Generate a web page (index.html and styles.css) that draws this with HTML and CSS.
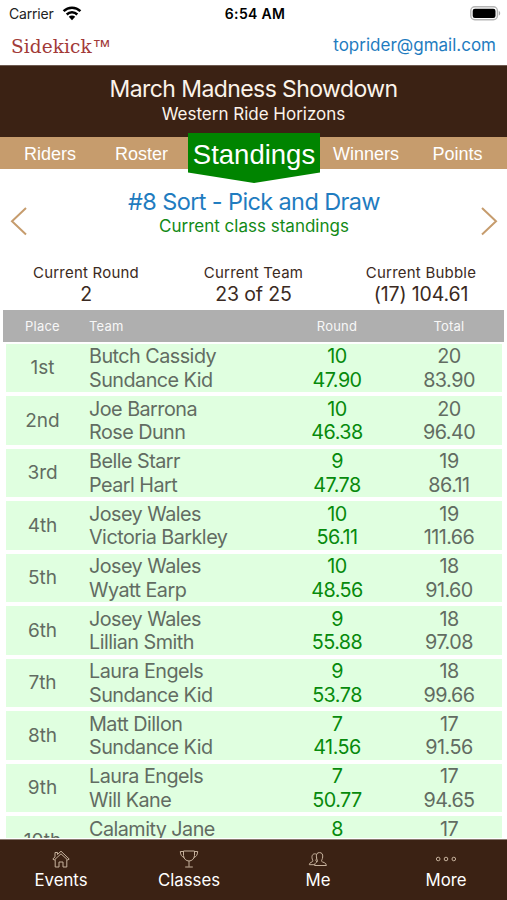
FILE: index.html
```html
<!DOCTYPE html>
<html lang="en">
<head>
<meta charset="utf-8">
<title>Sidekick Standings</title>
<link rel="stylesheet" href="styles.css">
</head>
<body>
<div class="app">
  <div class="status">
    <div class="carrier"><span>Carrier</span>
      <svg width="20" height="15" viewBox="0 0 20 15"><g fill="none" stroke="#000" stroke-width="2.5"><path d="M1.6 5.2a12 12 0 0 1 16.8 0"/><path d="M4.7 8.500a7.600 7.600 0 0 1 10.600 0"/></g><path d="M6.800 10.800a4.600 4.600 0 0 1 6.400 0L10 14.200z"/></svg>
    </div>
    <div class="clock">6:54 AM</div>
    <svg class="battery" width="31" height="15" viewBox="0 0 31 15"><rect x=".8" y=".8" width="26.6" height="13" rx="4" fill="#fff" stroke="#b5b5b5" stroke-width="1.4"/><rect x="2.700" y="2.700" width="22.800" height="9.200" rx="2.200"/><path d="M28.800 5v4.600c1.900-.6 1.900-4 0-4.600z" fill="#aaa"/></svg>
  </div>
  <div class="account"><div class="brand">Sidekick<span>™</span></div><div class="email">toprider@gmail.com</div></div>
  <header class="event"><h1>March Madness Showdown</h1><p>Western Ride Horizons</p></header>
  <nav class="tabs">
    <a class="t1">Riders</a><a class="t2">Roster</a><a class="active"><span>Standings</span></a><a class="t3">Winners</a><a class="t4">Points</a>
  </nav>
  <section class="class-nav">
    <svg width="18" height="30" viewBox="0 0 18 30"><path d="M16 2 2 15.300 16 28.500" fill="none" stroke="#c69c6d" stroke-width="2"/></svg>
    <div class="class-title"><h2>#8 Sort - Pick and Draw</h2><p>Current class standings</p></div>
    <svg width="18" height="30" viewBox="0 0 18 30"><path d="M2 2 16 15.300 2 28.500" fill="none" stroke="#c69c6d" stroke-width="2"/></svg>
  </section>
  <section class="stats">
    <div><label>Current Round</label><b>2</b></div>
    <div><label>Current Team</label><b>23 of 25</b></div>
    <div><label>Current Bubble</label><b>(17) 104.61</b></div>
  </section>
  <div class="cols head"><span>Place</span><span class="team">Team</span><span>Round</span><span>Total</span></div>
  <main class="list">
    <div class="cols row"><div class="place">1st</div><div class="team">Butch Cassidy<br>Sundance Kid</div><div class="round">10<br>47.90</div><div>20<br>83.90</div></div>
    <div class="cols row"><div class="place">2nd</div><div class="team">Joe Barrona<br>Rose Dunn</div><div class="round">10<br>46.38</div><div>20<br>96.40</div></div>
    <div class="cols row"><div class="place">3rd</div><div class="team">Belle Starr<br>Pearl Hart</div><div class="round">9<br>47.78</div><div>19<br>86.11</div></div>
    <div class="cols row"><div class="place">4th</div><div class="team">Josey Wales<br>Victoria Barkley</div><div class="round">10<br>56.11</div><div>19<br>111.66</div></div>
    <div class="cols row"><div class="place">5th</div><div class="team">Josey Wales<br>Wyatt Earp</div><div class="round">10<br>48.56</div><div>18<br>91.60</div></div>
    <div class="cols row"><div class="place">6th</div><div class="team">Josey Wales<br>Lillian Smith</div><div class="round">9<br>55.88</div><div>18<br>97.08</div></div>
    <div class="cols row"><div class="place">7th</div><div class="team">Laura Engels<br>Sundance Kid</div><div class="round">9<br>53.78</div><div>18<br>99.66</div></div>
    <div class="cols row"><div class="place">8th</div><div class="team">Matt Dillon<br>Sundance Kid</div><div class="round">7<br>41.56</div><div>17<br>91.56</div></div>
    <div class="cols row"><div class="place">9th</div><div class="team">Laura Engels<br>Will Kane</div><div class="round">7<br>50.77</div><div>17<br>94.65</div></div>
    <div class="cols row"><div class="place">10th</div><div class="team">Calamity Jane<br>&nbsp;</div><div class="round">8<br>&nbsp;</div><div>17<br>&nbsp;</div></div>
  </main>
  <footer class="bottom">
    <a><svg width="20" height="20" viewBox="0 0 20 20"><path d="M1.800 10 4 7.900V3.500h2.500v2L10 2.200l8.200 7.800-1.400 1.100L10 4.800l-6.800 6.300zM4.200 10.500V18H8v-5h4v5h3.800v-7.500"/></svg>Events</a>
    <a><svg width="20" height="20" viewBox="0 0 20 20"><path d="M4.500 2h11v4.500c0 3-2.500 5.500-5.500 5.500S4.500 9.500 4.500 6.500zM4.500 2.500H1.300C1.500 6 3 8 5.300 8.500M15.500 2.500h3.200C18.500 6 17 8 14.700 8.500M10 12v5.700M6.200 18h7.600"/></svg>Classes</a>
    <a><svg width="20" height="20" viewBox="0 0 20 20"><path d="M9.500 12.300c.4-.7-.9-2-1.100-4.300-.3-3 .8-4.400 3.100-4.400s3.500 1.400 3.200 4.400c-.2 2.300-1.500 3.600-1.100 4.300.6 1.100 4.800 1 4.800 4.200H6.600c0-3 2.400-3.100 2.900-4.200zM8.500 5.200C5.400 4 3.700 5.900 4 8.700c.2 2 1 2.700.8 3.500-.3 1.100-3.500 1-3.500 3.500h5.400M8.700 8.500c-.1 1.600-1 2.500-.7 3.500l1 .9"/></svg>Me</a>
    <a><svg class="dots" width="22" height="20" viewBox="0 0 22 20"><circle cx="3.200" cy="10" r="1.800"/><circle cx="11" cy="10" r="1.800"/><circle cx="18.800" cy="10" r="1.800"/></svg>More</a>
  </footer>
</div>
</body>
</html>
```
FILE: styles.css
```css
* { box-sizing: border-box; }
body { margin: 0; background: #fff; font-family: Inter, "Liberation Sans", sans-serif; }
h1, h2, p { margin: 0; font-weight: 400; }
.app { width: 507px; height: 900px; display: flex; flex-direction: column; overflow: hidden; }
.app > * { flex: none; }
.status { height: 28px; display: grid; grid-template-columns: 1fr auto 1fr; align-items: center; padding: 0 6px 0 9px; }
.carrier { display: flex; align-items: center; gap: 8px; font-size: 14px; letter-spacing: -.2px; color: #222; margin-top: -1px; }
.carrier svg { margin-top: -1px; }
.clock { font-size: 14px; font-weight: 600; letter-spacing: .3px; margin-top: -1px; }
.battery { justify-self: end; margin-top: -2px; }
.account { height: 37px; display: flex; justify-content: space-between; align-items: center; padding: 0 11px; }
.brand { font: 18.500px/22px "DejaVu Serif", serif; letter-spacing: .1px; color: #a23a38; }
.brand span { font-family: "Liberation Sans", sans-serif; }
.email { font-size: 17px; color: #1f7cc0; padding-bottom: 3px; }
.event { height: 72px; background: #3b2214; color: #fbf3ea; text-align: center; padding-top: 10px; border-top: 1px solid #6d5a50; }
.event h1 { font-size: 23px; line-height: 27px; letter-spacing: -.58px; }
.event p { font-size: 17px; line-height: 22px; }
.tabs { height: 32px; display: grid; grid-template-columns: 100px 88px 132px 92px 95px; background: #c69c6d; color: #fff; font: 18px/34px "Liberation Sans", sans-serif; text-align: center; }
.tabs .t2 { padding-right: 5px; }
.tabs .t4 { padding-right: 4px; }
.active { height: 50px; margin-top: -4px; background: #008400; clip-path: polygon(0 0, 100% 0, 100% 79%, 50% 100%, 0 79%); font-size: 27.500px; line-height: 43px; }
.class-nav { height: 81px; display: flex; justify-content: space-between; padding: 20px 9px 0 10px; }
.class-nav svg { margin-top: 17px; }
.class-title { text-align: center; }
.class-title h2 { font-size: 23.500px; line-height: 26px; letter-spacing: -.62px; color: #1f7cc0; }
.class-title p { font-size: 17px; line-height: 23px; color: #128a16; }
.stats { height: 60px; display: grid; grid-template-columns: 172px 163px 172px; padding-top: 13px; color: #3b2a22; text-align: center; }
.stats label, .stats b { display: block; font-weight: 400; }
.stats label { font-size: 15px; line-height: 20px; letter-spacing: .22px; }
.stats b { font-size: 19.500px; line-height: 23px; letter-spacing: -.15px; }
.cols { display: grid; grid-template-columns: 73px 199px 118px 1fr; align-items: center; text-align: center; }
.cols .team { text-align: left; padding-left: 10px; }
.head { height: 32px; margin: 0 3px; padding: 0 2px 0 3px; background: #afafaf; color: #f7f7f7; font-size: 13px; letter-spacing: .2px; }
.list { height: 496px; overflow: hidden; padding: 2px 5px 0 6px; }
.row { height: 48.300px; margin-bottom: 4.200px; padding-top: 1.200px; background: #e0ffe0; color: #626c62; font-size: 19.800px; line-height: 23.800px; letter-spacing: -.53px; }
.row .place { padding-bottom: 1.500px; font-size: 19px; letter-spacing: 0; }
.row .round { color: #078a0c; }
.bottom { height: 61px; margin-top: 1px; border-top: 1px solid #8a7a70; background: #3b2214; color: #fff; display: grid; grid-template-columns: 122px 134px 124px 127px; font-size: 16.800px; line-height: 22px; }
.bottom a { display: flex; flex-direction: column; align-items: center; padding-top: 9px; }
.bottom a:last-child { padding-left: 5px; }
.bottom svg { fill: none; stroke: #c7b29d; stroke-width: 1; }
```
